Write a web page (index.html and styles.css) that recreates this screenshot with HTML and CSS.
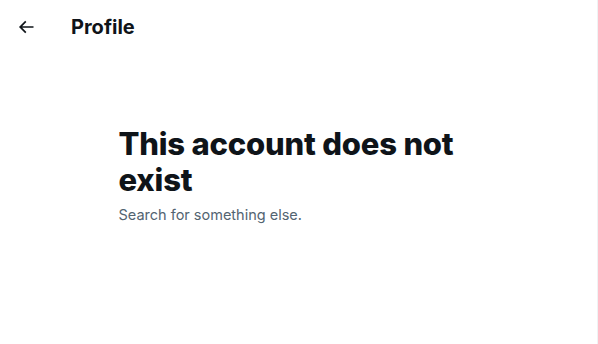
FILE: index.html
```html
<!DOCTYPE html>
<html>
<head>
<meta charset="utf-8">
<link rel="stylesheet" href="styles.css">
</head>
<body>
<div class="column">
  <header class="topbar">
    <div class="back">
      <svg class="back-icon" viewBox="0 0 24 24" aria-hidden="true"><path d="M7.414 13l5.043 5.04-1.414 1.42L3.586 12l7.457-7.46 1.414 1.42L7.414 11H21v2H7.414z"/></svg>
    </div>
    <h2 class="title">Profile</h2>
  </header>
  <main class="empty">
    <h1 class="empty-title">This account does not exist</h1>
    <p class="empty-sub">Search for something else.</p>
  </main>
</div>
</body>
</html>
```

FILE: styles.css
```css
html, body {
  margin: 0;
  padding: 0;
  background: #ffffff;
}
body {
  font-family: "Inter", "Liberation Sans", sans-serif;
  color: #0f1419;
}
.column {
  width: 597px;
  height: 344px;
  border-right: 1px solid #eff3f4;
  box-sizing: content-box;
}
.topbar {
  height: 53px;
  display: flex;
  align-items: center;
  padding: 0 16px;
}
.back {
  width: 55px;
  display: flex;
  align-items: center;
}
.back-icon {
  width: 20px;
  height: 20px;
  fill: #0f1419;
}
.title {
  margin: 0;
  font-size: 20px;
  font-weight: 700;
  line-height: 24px;
}
.empty {
  width: 360px;
  margin: 73px auto 0;
}
.empty-title {
  margin: 0;
  font-size: 31px;
  font-weight: 800;
  line-height: 36px;
  letter-spacing: -0.2px;
}
.empty-sub {
  margin: 7px 0 0;
  font-size: 14.5px;
  line-height: 20px;
  color: #536471;
}
```
